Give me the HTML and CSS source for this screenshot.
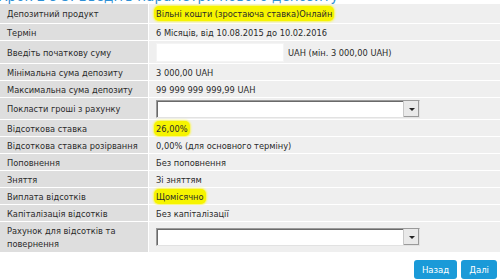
FILE: index.html
```html
<!DOCTYPE html>
<html lang="uk">
<head>
<meta charset="utf-8">
<link rel="stylesheet" href="styles.css">
</head>
<body>
<div class="page">
  <h2 class="title">Крок 2 з 3: Введіть параметри нового депозиту</h2>
  <div class="form">
    <div class="lbl r1">Депозитний продукт</div>
    <div class="val r1"><span class="hl">Вільні кошти (зростаюча ставка)Онлайн</span></div>

    <div class="lbl">Термін</div>
    <div class="val">6 Місяців, від 10.08.2015 до 10.02.2016</div>

    <div class="lbl r3">Введіть початкову суму</div>
    <div class="val r3"><span class="amount"></span><span class="unit">UAH (мін. 3 000,00 UAH)</span></div>

    <div class="lbl">Мінімальна сума депозиту</div>
    <div class="val">3 000,00 UAH</div>

    <div class="lbl">Максимальна сума депозиту</div>
    <div class="val">99 999 999 999,99 UAH</div>

    <div class="lbl r6">Покласти гроші з рахунку</div>
    <div class="val r6"><span class="select"><span class="arrow"></span></span></div>

    <div class="lbl">Відсоткова ставка</div>
    <div class="val"><span class="hl">26,00%</span></div>

    <div class="lbl">Відсоткова ставка розірвання</div>
    <div class="val">0,00% (для основного терміну)</div>

    <div class="lbl">Поповнення</div>
    <div class="val">Без поповнення</div>

    <div class="lbl">Зняття</div>
    <div class="val">Зі зняттям</div>

    <div class="lbl">Виплата відсотків</div>
    <div class="val"><span class="hl">Щомісячно</span></div>

    <div class="lbl">Капіталізація відсотків</div>
    <div class="val">Без капіталізації</div>

    <div class="lbl r13">Рахунок для відсотків та повернення</div>
    <div class="val r13"><span class="select"><span class="arrow"></span></span></div>
  </div>
  <div class="actions">
    <button class="btn">Назад</button>
    <button class="btn">Далі</button>
  </div>
</div>
</body>
</html>
```
FILE: styles.css
```css
html, body {
  margin: 0;
  padding: 0;
  background: #fff;
}
.page {
  width: 500px;
  height: 279px;
  overflow: hidden;
  font-family: "DejaVu Sans Condensed", "DejaVu Sans", sans-serif;
  font-size: 9.2px;
  color: #2a2a2a;
}
.title {
  margin: -13px 0 0 -2px;
  height: 17px;
  font-size: 15px;
  font-weight: normal;
  color: #2d8fd5;
  white-space: nowrap;
  font-family: "DejaVu Sans Condensed", sans-serif;
}
.form {
  display: grid;
  grid-template-columns: 148px 1fr;
  column-gap: 1px;
  row-gap: 1px;
}
.lbl, .val {
  display: flex;
  align-items: center;
  min-height: 16px;
  padding: 0 6px 0 7px;
  line-height: 13px;
  white-space: nowrap;
}
.lbl { background: #dedede; }
.val { background: #efefef; }
.r1 { min-height: 19px; }
.r3 { min-height: 22px; }
.r6 { min-height: 21px; }
.lbl.r13 { min-height: 30px; white-space: normal; padding-right: 30px; }
.val.r13 { min-height: 30px; }
.hl {
  background: #f6f400;
  border-radius: 5px;
  padding: 1px 2px;
  margin-left: -2px;
  box-shadow: 0 0 2px 1px #f9f55a;
}
.amount {
  display: inline-block;
  width: 126px;
  height: 17px;
  background: #fff;
  border: 1px solid #f4f4f4;
  margin-right: 4px;
}
.select {
  position: relative;
  display: inline-block;
  width: 262px;
  height: 16px;
  background: #fff;
  border: 1px solid #9a9a9a;
  border-right-color: #e2e2e2;
  border-bottom-color: #e2e2e2;
  box-shadow: inset 1px 1px 0 #6a6a6a;
}
.arrow {
  position: absolute;
  right: 0;
  top: 0;
  width: 15px;
  height: 16px;
  background: #e9e9e9;
  border-left: 1px solid #c8c8c8;
  box-shadow: inset -1px -1px 0 #9a9a9a;
}
.arrow::after {
  content: "";
  position: absolute;
  left: 5px;
  top: 7px;
  border-left: 3px solid transparent;
  border-right: 3px solid transparent;
  border-top: 3px solid #222;
}
.actions {
  display: flex;
  justify-content: flex-end;
  gap: 4px;
  padding: 8px 3px 0 0;
}
.btn {
  font-family: "DejaVu Sans Condensed", sans-serif;
  font-size: 9.5px;
  color: #fff;
  background: #1a9ad8;
  border: none;
  border-radius: 3px;
  height: 19px;
  padding: 0 8px;
}
```
